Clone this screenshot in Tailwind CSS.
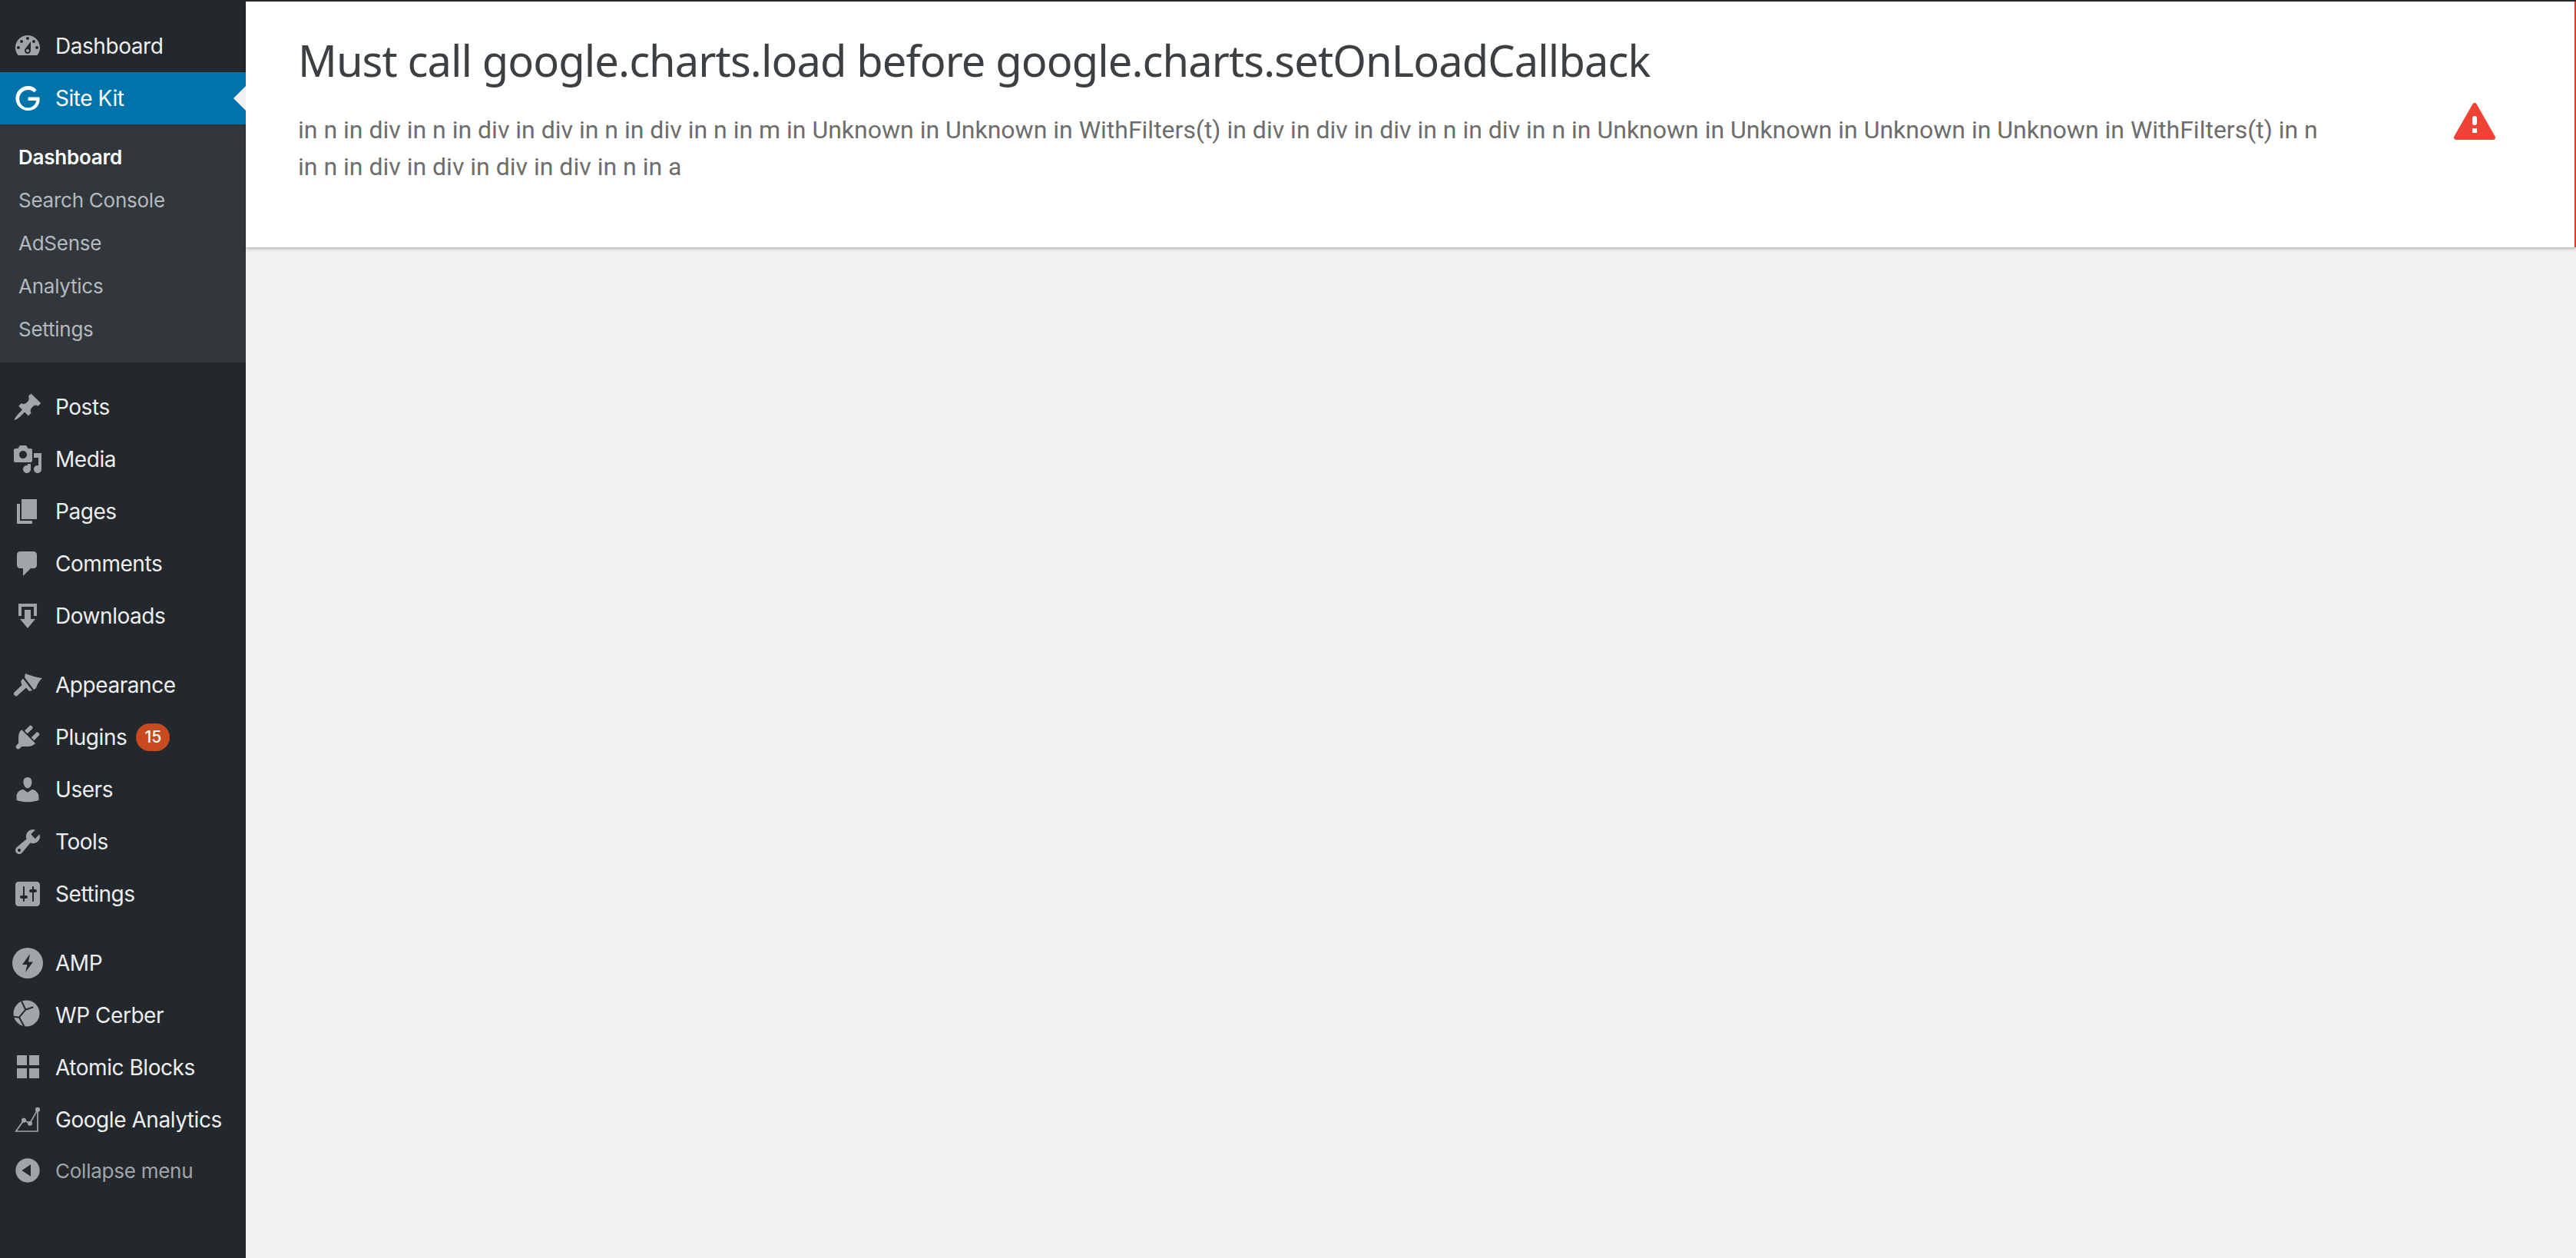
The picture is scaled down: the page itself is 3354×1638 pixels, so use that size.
<!DOCTYPE html>
<html lang="en">
<head>
  <meta charset="UTF-8">
  <title>Site Kit Dashboard</title>
  <script src="https://cdn.jsdelivr.net/npm/@tailwindcss/browser@4"></script>
</head>
<body class="flex h-[1638px] overflow-hidden bg-[#f1f1f1] font-['Inter',sans-serif]">
  <!-- Sidebar -->
  <aside class="w-[320px] shrink-0 bg-[#23282d] pt-[26px] text-[28px] tracking-[-0.45px] text-[#eeeeee]">
    <a class="flex h-[68px] items-center">
      <svg class="ml-[16px] mr-[16px] h-10 w-10 fill-[#a0a5aa]" viewBox="0 0 20 20"><path fill-rule="evenodd" d="M3.76 16h12.48c1.1-1.37 1.76-3.11 1.76-5 0-4.42-3.58-8-8-8s-8 3.58-8 8c0 1.89.66 3.63 1.76 5zM10 4c.55 0 1 .45 1 1s-.45 1-1 1-1-.45-1-1 .45-1 1-1zM6 6c.55 0 1 .45 1 1s-.45 1-1 1-1-.45-1-1 .45-1 1-1zm8 0c.55 0 1 .45 1 1s-.45 1-1 1-1-.45-1-1 .45-1 1-1zm-5.37 5.55L12 7v6c0 1.1-.9 2-2 2s-2-.9-2-2c0-.57.24-1.08.63-1.45zM4 10c.55 0 1 .45 1 1s-.45 1-1 1-1-.45-1-1 .45-1 1-1zm12 0c.55 0 1 .45 1 1s-.45 1-1 1-1-.45-1-1 .45-1 1-1zm-5 3c0-.55-.45-1-1-1s-1 .45-1 1 .45 1 1 1 1-.45 1-1z"/></svg>
      <span>Dashboard</span>
    </a>
    <a class="relative flex h-[68px] items-center bg-[#0073aa] text-white">
      <svg class="ml-[20px] mr-[20px] h-[32px] w-[32px] fill-white" viewBox="0 0 24 24"><path d="M12.48 10.92v3.28h7.84c-.24 1.84-.853 3.187-1.787 4.133-1.147 1.147-2.933 2.933-6.053 2.933-4.827 0-8.6-3.893-8.6-8.72s3.773-8.72 8.6-8.72c2.6 0 4.507 1.027 5.907 2.347l2.307-2.307C18.747 1.44 16.133 0 12.48 0 5.867 0 .307 5.387.307 12s5.56 12 12.173 12c3.573 0 6.267-1.173 8.373-3.36 2.16-2.16 2.84-5.213 2.84-7.667 0-.76-.053-1.467-.173-2.053H12.48z"/></svg>
      <span>Site Kit</span>
      <span class="absolute right-0 top-[18px] border-y-[16px] border-r-[16px] border-y-transparent border-r-[#f1f1f1]"></span>
    </a>
    <div class="flex h-[310px] flex-col bg-[#32373c] pt-[14px] text-[26px] tracking-[-0.25px] text-[#b4b9be]">
      <a class="flex h-[56px] items-center pl-[24px] font-semibold text-white">Dashboard</a>
      <a class="flex h-[56px] items-center pl-[24px]">Search Console</a>
      <a class="flex h-[56px] items-center pl-[24px]">AdSense</a>
      <a class="flex h-[56px] items-center pl-[24px]">Analytics</a>
      <a class="flex h-[56px] items-center pl-[24px]">Settings</a>
    </div>
    <nav class="pt-[24px]">
      <a class="flex h-[68px] items-center">
        <svg class="mx-[16px] h-10 w-10 fill-[#a0a5aa]" viewBox="0 0 20 20"><path d="M10.44 3.02l1.82-1.82 6.36 6.35-1.83 1.82c-1.05-.68-2.48-.57-3.41.36l-.75.75c-.92.93-1.04 2.35-.35 3.41l-1.83 1.82-2.41-2.41-2.8 2.79c-.42.42-3.38 2.71-3.8 2.29s1.86-3.39 2.28-3.81l2.79-2.79L4.1 9.36l1.83-1.82c1.05.69 2.48.57 3.4-.36l.75-.75c.93-.92 1.05-2.35.36-3.41z"/></svg>
        <span>Posts</span>
      </a>
      <a class="flex h-[68px] items-center">
        <svg class="mx-[16px] h-10 w-10 fill-[#a0a5aa]" viewBox="0 0 20 20"><path fill-rule="evenodd" d="M13 11V4c0-.55-.45-1-1-1h-1.67L9 1H5L3.67 3H2c-.55 0-1 .45-1 1v7c0 .55.45 1 1 1h10c.55 0 1-.45 1-1zM7 4.5c1.38 0 2.5 1.12 2.5 2.5S8.38 9.5 7 9.5 4.5 8.38 4.5 7 5.62 4.5 7 4.5zM14 6h5v10.5c0 1.38-1.12 2.5-2.5 2.5S14 17.88 14 16.5s1.12-2.5 2.5-2.5c.17 0 .34.02.5.05V9h-3V6zm-4 8.05V13h2v3.5c0 1.38-1.12 2.5-2.5 2.5S7 17.88 7 16.5 8.12 14 9.5 14c.17 0 .34.02.5.05z"/></svg>
        <span>Media</span>
      </a>
      <a class="flex h-[68px] items-center">
        <svg class="mx-[16px] h-10 w-10 fill-[#a0a5aa]" viewBox="0 0 20 20"><path d="M6 15V2h10v13H6zm-1 1h8v2H3V5h2v11z"/></svg>
        <span>Pages</span>
      </a>
      <a class="flex h-[68px] items-center">
        <svg class="mx-[16px] h-10 w-10 fill-[#a0a5aa]" viewBox="0 0 20 20"><path d="M5 2h9c1.1 0 2 .9 2 2v7c0 1.1-.9 2-2 2h-2l-5 5v-5H5c-1.1 0-2-.9-2-2V4c0-1.1.9-2 2-2z"/></svg>
        <span>Comments</span>
      </a>
      <a class="flex h-[68px] items-center">
        <svg class="mx-[16px] h-10 w-10 fill-[#a0a5aa]" viewBox="0 0 20 20"><path d="M14.01 4v6h2V2H4v8h2.01V4h8zm-2 2v6h3l-5 6-5-6h3V6h4z"/></svg>
        <span>Downloads</span>
      </a>
    </nav>
    <nav class="pt-[22px]">
      <a class="flex h-[68px] items-center">
        <svg class="mx-[16px] h-10 w-10 fill-[#a0a5aa]" viewBox="0 0 40 40"><path d="M17 5c6 2 14 5 22 6-4 3.500-6.500 8-8 13l-3 2-12-16z"/><path d="M14 11.500L26 27l-4 1-4-4.500L7.500 33a3 3 0 0 1-5-3.500L12.500 20 11 15z"/></svg>
        <span>Appearance</span>
      </a>
      <a class="flex h-[68px] items-center">
        <svg class="mx-[16px] h-10 w-10 fill-[#a0a5aa]" viewBox="0 0 20 20"><path d="M13.11 4.36L9.87 7.6 8 5.73l3.24-3.24c.35-.34 1.05-.2 1.56.32.52.51.66 1.21.31 1.55zm-8 1.77l.91-1.12 9.01 9.01-1.19.84c-.71.71-2.63 1.16-3.82 1.16H6.14L4.9 17.26c-.59.59-1.54.59-2.12 0-.59-.58-.59-1.53 0-2.12l1.24-1.24v-3.88c0-1.13.4-3.19 1.09-3.89zm7.26 3.97l3.24-3.24c.34-.35 1.04-.21 1.55.31.52.51.66 1.21.31 1.55l-3.24 3.25z"/></svg>
        <span>Plugins</span>
        <span class="ml-[12px] flex h-[36px] w-[44px] items-center justify-center rounded-full bg-[#ca4a1f] text-[21px] font-medium tracking-normal text-white">15</span>
      </a>
      <a class="flex h-[68px] items-center">
        <svg class="mx-[16px] h-10 w-10 fill-[#a0a5aa]" viewBox="0 0 20 20"><path d="M10 9.25c-2.27 0-2.73-3.44-2.73-3.44C7 4.02 7.82 2 9.97 2c2.16 0 2.98 2.02 2.71 3.81 0 0-.41 3.44-2.68 3.44zm0 2.57L12.72 10c2.39 0 4.52 2.33 4.52 4.53v2.49s-3.65 1.13-7.24 1.13c-3.65 0-7.24-1.13-7.24-1.13v-2.49c0-2.25 1.94-4.48 4.47-4.48z"/></svg>
        <span>Users</span>
      </a>
      <a class="flex h-[68px] items-center">
        <svg class="mx-[16px] h-10 w-10 fill-[#a0a5aa]" viewBox="0 0 20 20"><path fill-rule="evenodd" d="M16.68 9.77c-1.34 1.34-3.3 1.67-4.95.99l-5.41 6.52c-.99.99-2.59.99-3.58 0s-.99-2.59 0-3.57l6.52-5.42c-.68-1.65-.35-3.61.99-4.95 1.28-1.28 3.12-1.62 4.72-1.06l-2.89 2.89 2.82 2.82 2.86-2.87c.53 1.58.18 3.39-1.08 4.65zM3.81 16.21c.4.39 1.04.39 1.43 0 .4-.4.4-1.04 0-1.43-.39-.4-1.03-.4-1.43 0-.39.39-.39 1.03 0 1.43z"/></svg>
        <span>Tools</span>
      </a>
      <a class="flex h-[68px] items-center">
        <svg class="mx-[16px] h-10 w-10 fill-[#a0a5aa]" viewBox="0 0 20 20"><path fill-rule="evenodd" d="M18 16V4c0-1.1-.9-2-2-2H4c-1.1 0-2 .9-2 2v12c0 1.1.9 2 2 2h12c1.1 0 2-.9 2-2zM8 11h1c.55 0 1 .45 1 1s-.45 1-1 1H8v1.5c0 .28-.22.5-.5.5s-.5-.22-.5-.5V13H6c-.55 0-1-.45-1-1s.45-1 1-1h1V5.5c0-.28.22-.5.5-.5s.5.22.5.5V11zm5-2h-1c-.55 0-1-.45-1-1s.45-1 1-1h1V5.5c0-.28.22-.5.5-.5s.5.22.5.5V7h1c.55 0 1 .45 1 1s-.45 1-1 1h-1v5.500c0 .28-.22.5-.5.5s-.5-.22-.5-.5V9z"/></svg>
        <span>Settings</span>
      </a>
    </nav>
    <nav class="pt-[22px]">
      <a class="flex h-[68px] items-center">
        <svg class="mx-[16px] h-10 w-10 fill-[#a0a5aa]" viewBox="0 0 40 40"><path fill-rule="evenodd" d="M20 0a20 20 0 1 0 0 40a20 20 0 0 0 0-40zM23 8L13 22h6.500L17 32l10-13.500h-6z"/></svg>
        <span>AMP</span>
      </a>
      <a class="flex h-[68px] items-center">
        <svg class="mx-[16px] h-10 w-10" viewBox="0 0 40 40"><circle class="fill-[#a0a5aa]" cx="18.500" cy="17.500" r="17"/><path class="fill-none stroke-[#23282d] stroke-2" d="M12.300 2L17.300 12.700 27.300 9.300M17.300 12.700L9 22.700 15.700 35M1.500 21.700L9 22.700"/></svg>
        <span>WP Cerber</span>
      </a>
      <a class="flex h-[68px] items-center">
        <svg class="mx-[16px] h-10 w-10 fill-[#a0a5aa]" viewBox="0 0 40 40"><path d="M6 4h13v13H6zM22 4h13v13H22zM6 21h13v13H6zM22 21h13v13H22z"/></svg>
        <span>Atomic Blocks</span>
      </a>
      <a class="flex h-[68px] items-center">
        <svg class="mx-[16px] h-10 w-10 fill-none stroke-[#a0a5aa] stroke-[1.7px]" viewBox="0 0 40 40"><path d="M4.700 35L15 20.700 23 24.700 33 6.700V35z"/><circle class="fill-[#a0a5aa]" cx="15" cy="20.700" r="2.200"/><circle class="fill-[#a0a5aa]" cx="23" cy="24.700" r="2.200"/><circle class="fill-[#a0a5aa]" cx="33" cy="6.700" r="2.200"/></svg>
        <span>Google Analytics</span>
      </a>
      <a class="flex h-[64px] items-center text-[26px] tracking-[-0.25px] text-[#a0a5aa]">
        <svg class="mx-[16px] h-10 w-10 fill-[#a0a5aa]" viewBox="0 0 20 20"><path fill-rule="evenodd" d="M10 2.16c4.33 0 7.84 3.51 7.84 7.84s-3.51 7.84-7.84 7.84S2.16 14.33 2.16 10 5.71 2.16 10 2.16zm2 11.72V6.12L6.18 9.97z"/></svg>
        <span>Collapse menu</span>
      </a>
    </nav>
  </aside>

  <!-- Main -->
  <main class="flex-1 border-t-2 border-[#23282d]">
    <section class="flex h-[320px] items-start border-r-2 border-[#dc3c36] bg-white pl-[68px] pt-[40px] shadow-[0_2px_4px_rgba(0,0,0,0.25)]">
      <div class="w-[2640px]">
        <h1 class="mb-[31px] font-['Noto_Sans',sans-serif] text-[56px] leading-[72px] tracking-[-0.9px] text-[#3c4043]">Must call google.charts.load before google.charts.setOnLoadCallback</h1>
        <p class="font-['Roboto',sans-serif] text-[32px] leading-[48px] text-[#6d6d6d]">in n in div in n in div in div in n in div in n in m in Unknown in Unknown in WithFilters(t) in div in div in div in n in div in n in Unknown in Unknown in Unknown in Unknown in WithFilters(t) in n in n in div in div in div in div in n in a</p>
      </div>
      <svg class="ml-[166px] mt-[91px] h-[50px] w-[56px]" viewBox="0 0 56 50">
        <path class="fill-[#ee4335] stroke-[#ee4335] stroke-[6px]" stroke-linejoin="round" d="M28 4L4 46h48z"/>
        <rect class="fill-white" x="25" y="18" width="6" height="12" rx="3"/>
        <rect class="fill-white" x="25" y="34" width="6" height="6"/>
      </svg>
    </section>
  </main>
</body>
</html>
